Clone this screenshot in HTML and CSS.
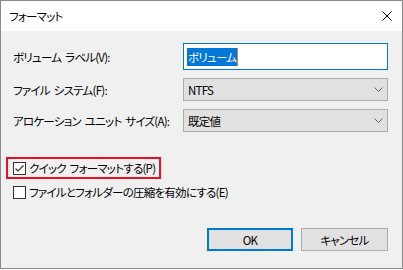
FILE: index.html
```html
<!DOCTYPE html>
<html lang="ja">
<head>
  <meta charset="UTF-8">
  <meta name="viewport" content="width=device-width, initial-scale=1.0">
  <title>フォーマット</title>
  <link rel="stylesheet" href="styles.css">
</head>
<body>
  <div class="window">
    <div class="titlebar">
      <span class="title">フォーマット</span>
      <svg class="close" width="10" height="10" viewBox="0 0 10 10">
        <path d="M0.5 0.5 L9.5 9.5 M9.5 0.5 L0.5 9.5" stroke="#000" stroke-width="1" fill="none"/>
      </svg>
    </div>

    <div class="content">
      <div class="fields">
        <div class="label">ボリューム ラベル(V):</div>
        <div class="textbox"><span class="selected">ボリューム</span><span class="caret"></span></div>

        <div class="label">ファイル システム(F):</div>
        <div class="combo">
          <span>NTFS</span>
          <svg class="chevron" width="9" height="5" viewBox="0 0 9 5"><path d="M0.5 0.5 L4.5 4.5 L8.5 0.5" stroke="#606060" fill="none"/></svg>
        </div>

        <div class="label">アロケーション ユニット サイズ(A):</div>
        <div class="combo">
          <span>既定値</span>
          <svg class="chevron" width="9" height="5" viewBox="0 0 9 5"><path d="M0.5 0.5 L4.5 4.5 L8.5 0.5" stroke="#606060" fill="none"/></svg>
        </div>
      </div>

      <div class="options">
        <div class="highlight">
          <div class="check-row">
            <span class="checkbox">
              <svg width="11" height="11" viewBox="0 0 11 11"><path d="M1.5 5.5 L4 8 L9.5 2.5" stroke="#333" stroke-width="1.2" fill="none"/></svg>
            </span>
            <span>クイック フォーマットする(P)</span>
          </div>
        </div>
        <div class="check-row second">
          <span class="checkbox"></span>
          <span>ファイルとフォルダーの圧縮を有効にする(E)</span>
        </div>
      </div>

      <div class="buttons">
        <div class="button default">OK</div>
        <div class="button cancel">キャンセル</div>
      </div>
    </div>
  </div>
</body>
</html>
```

FILE: styles.css
```css
body {
  margin: 0;
  background-color: #ffffff;
  font-family: "Noto Sans CJK JP", "Noto Sans", sans-serif;
  font-size: 11.5px;
  letter-spacing: -0.75px;
  font-feature-settings: "palt";
  color: #000;
}
.window {
  width: 403px;
  height: 269px;
  box-sizing: border-box;
  border: 1px solid #8a8a8a;
  display: flex;
  flex-direction: column;
  background-color: #f0f0f0;
}
.titlebar {
  height: 30px;
  flex-shrink: 0;
  background-color: #fff;
  display: flex;
  align-items: center;
  justify-content: space-between;
  padding: 0 10px 0 8px;
}
.title {
  line-height: 14px;
}
.close {
  display: block;
  margin-top: -1px;
}
.content {
  flex: 1;
  display: flex;
  flex-direction: column;
  padding: 12px 14px 17px 12px;
}
.fields {
  display: grid;
  grid-template-columns: 170px 205px;
  row-gap: 8px;
  align-items: center;
}
.label {
  line-height: 14px;
  white-space: nowrap;
  word-spacing: 2px;
}
.textbox {
  height: 27px;
  box-sizing: border-box;
  border: 1px solid #0078d7;
  background-color: #fff;
  display: flex;
  align-items: center;
  padding-left: 3px;
}
.selected {
  background-color: #0078d7;
  color: #fff;
  line-height: 18px;
  padding: 0 1px;
}
.caret {
  width: 1px;
  height: 18px;
  background-color: #e87a1e;
}
.combo {
  height: 23px;
  box-sizing: border-box;
  border: 1px solid #adadad;
  background-color: #e1e1e1;
  display: flex;
  align-items: center;
  justify-content: space-between;
  padding: 0 4px 0 4px;
}
.chevron {
  display: block;
}
.options {
  margin-top: 25px;
  display: flex;
  flex-direction: column;
  align-items: flex-start;
}
.highlight {
  margin-left: -7px;
  border: 2px solid #e81123;
  padding: 2px 4px 2px 5px;
}
.check-row {
  display: flex;
  align-items: center;
  gap: 3px;
  height: 14px;
  line-height: 14px;
  white-space: nowrap;
  word-spacing: 2px;
}
.check-row.second {
  margin-top: 6px;
}
.checkbox {
  width: 13px;
  height: 13px;
  flex-shrink: 0;
  box-sizing: border-box;
  border: 1px solid #333;
  background-color: #fff;
  display: flex;
  align-items: center;
  justify-content: center;
}
.checkbox svg {
  display: block;
}
.buttons {
  margin-top: auto;
  display: flex;
  justify-content: flex-end;
  gap: 8px;
}
.button {
  height: 23px;
  box-sizing: border-box;
  background-color: #e1e1e1;
  display: flex;
  align-items: center;
  justify-content: center;
}
.button.default {
  width: 86px;
  border: 2px solid #0078d7;
}
.button.cancel {
  width: 87px;
  border: 1px solid #adadad;
}
```
